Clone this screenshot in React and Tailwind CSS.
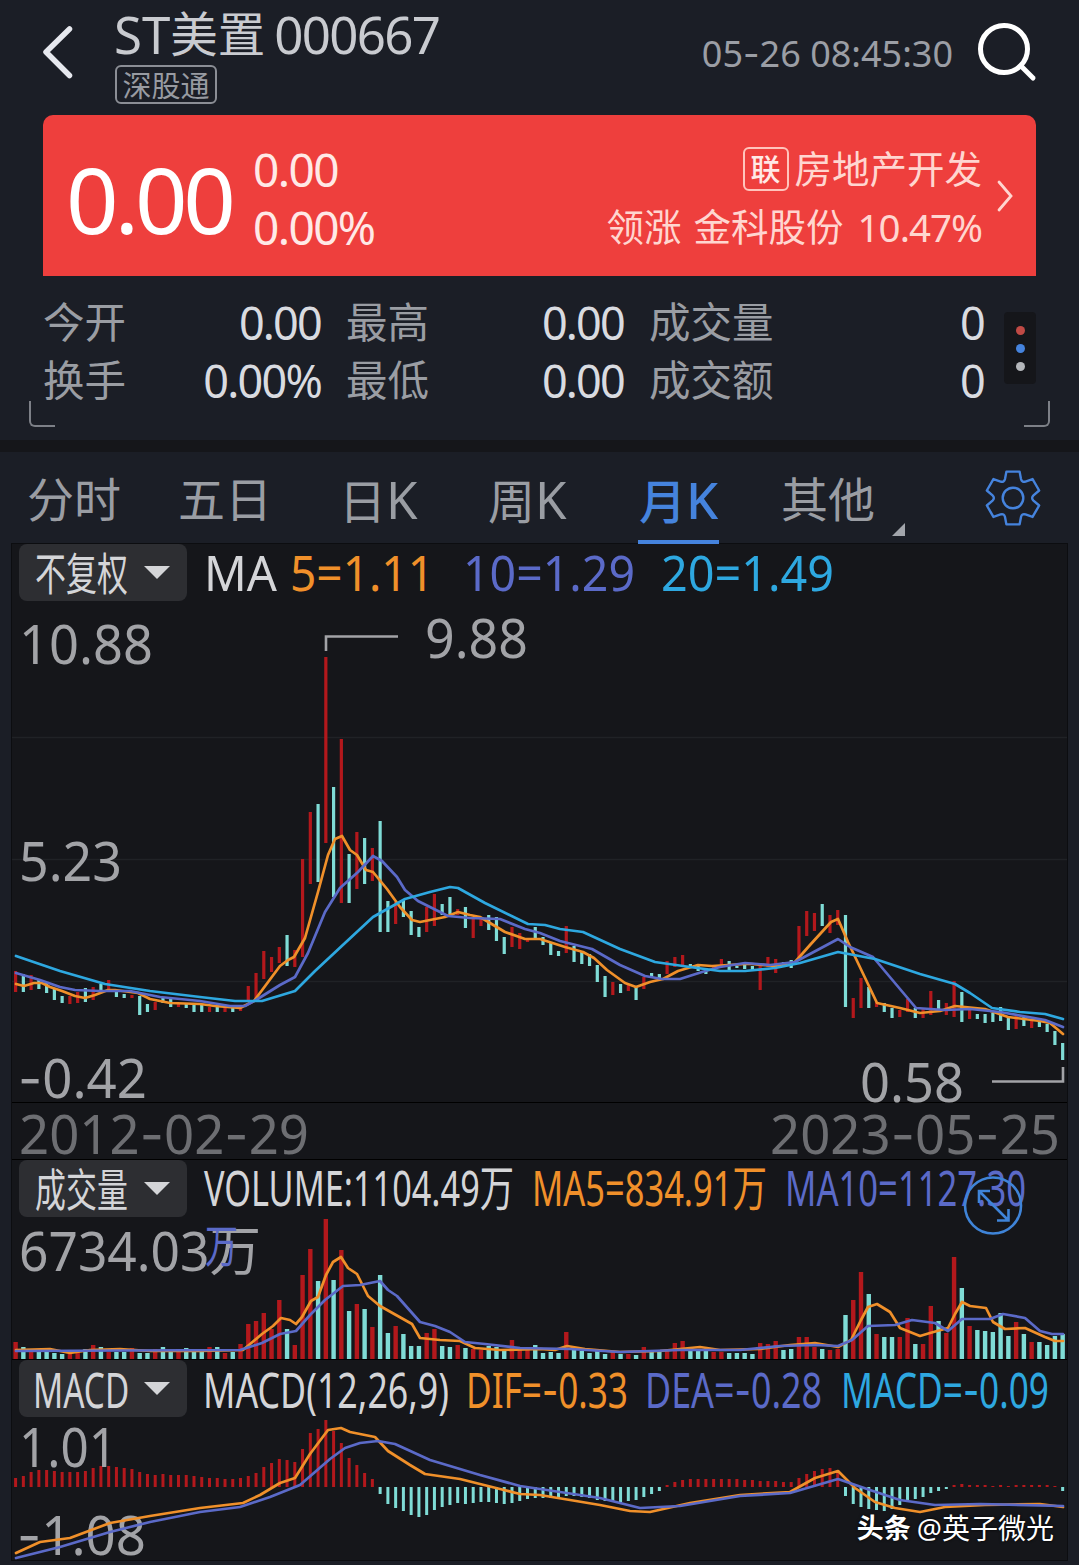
import React from "react";

const STEP = 7.756;
const START = 15.6;
const barX = (i) => START + STEP * i;

const UP = "#b3181c";
const DOWN = "#7fdcd6";
const ORANGE = "#f0902a";
const INDIGO = "#5b6ac8";
const CYAN = "#2ea8e0";

// [r = rising / c = falling, top, bottom]
const candles = [
  ["r", 971, 992], ["c", 974, 992], ["r", 975, 990], ["c", 979, 989], ["c", 983, 993], ["c", 988, 1000],
  ["c", 996, 1003], ["r", 996, 1004], ["r", 992, 1003], ["c", 988, 1002], ["r", 987, 1000], ["c", 984, 991],
  ["r", 980, 990], ["c", 991, 997], ["c", 994, 998], ["r", 995, 998], ["c", 996, 1015], ["c", 1004, 1012],
  ["r", 1002, 1010], ["c", 997, 1003], ["c", 997, 1007], ["r", 1003, 1007], ["c", 1003, 1008], ["c", 1003, 1012],
  ["c", 1005, 1012], ["r", 1007, 1012], ["c", 1007, 1012], ["r", 1007, 1012], ["c", 1007, 1012], ["r", 1006, 1011],
  ["r", 986, 1002], ["r", 973, 999], ["r", 951, 979], ["r", 957, 972], ["r", 947, 963], ["c", 935, 966],
  ["r", 950, 967], ["r", 859, 957], ["r", 812, 884], ["c", 804, 882], ["r", 657, 843], ["c", 787, 897],
  ["r", 739, 903], ["c", 854, 903], ["r", 832, 889], ["c", 838, 884], ["r", 848, 881], ["c", 821, 932],
  ["c", 901, 932], ["r", 902, 924], ["c", 900, 917], ["c", 911, 935], ["c", 927, 937], ["r", 907, 932],
  ["r", 894, 926], ["c", 904, 915], ["c", 897, 914], ["r", 909, 915], ["c", 907, 928], ["r", 919, 938],
  ["r", 918, 926], ["c", 915, 930], ["c", 917, 941], ["c", 937, 954], ["r", 927, 947], ["r", 933, 949],
  ["r", 938, 942], ["c", 927, 939], ["c", 937, 945], ["c", 943, 955], ["c", 951, 956], ["r", 926, 953],
  ["c", 946, 962], ["c", 951, 964], ["c", 954, 966], ["c", 965, 982], ["c", 976, 997], ["r", 982, 995],
  ["c", 984, 993], ["r", 985, 991], ["c", 986, 1000], ["r", 977, 989], ["c", 973, 978], ["c", 974, 980],
  ["r", 961, 974], ["r", 957, 967], ["r", 955, 967], ["c", 964, 967], ["c", 966, 971], ["c", 968, 974],
  ["r", 966, 970], ["r", 959, 965], ["c", 961, 971], ["c", 966, 968], ["c", 965, 969], ["c", 966, 970],
  ["r", 963, 990], ["r", 957, 967], ["r", 959, 973], ["c", 962, 966], ["c", 960, 968], ["r", 926, 957],
  ["r", 911, 936], ["r", 913, 931], ["c", 904, 926], ["r", 915, 933], ["r", 910, 925], ["c", 915, 1007],
  ["r", 998, 1018], ["r", 978, 1008], ["c", 987, 1008], ["r", 1002, 1007], ["c", 1003, 1012], ["c", 1008, 1018],
  ["r", 1010, 1017], ["r", 999, 1012], ["c", 1008, 1018], ["r", 1008, 1018], ["r", 991, 1015], ["c", 1000, 1009],
  ["r", 1003, 1015], ["r", 981, 1017], ["c", 992, 1022], ["r", 1010, 1019], ["c", 1014, 1019], ["c", 1014, 1023],
  ["c", 1013, 1022], ["c", 1007, 1021], ["c", 1018, 1030], ["r", 1016, 1029], ["c", 1016, 1026], ["r", 1020, 1028],
  ["c", 1022, 1027], ["c", 1024, 1032], ["c", 1031, 1045], ["c", 1043, 1060],
];

const volumes = [
  17, 12, 9, 8, 7, 6, 5, 5, 8, 10, 14, 12, 7, 7, 7, 11, 6, 6, 10, 12, 8, 8, 11, 7, 7, 12, 12, 6, 7, 15,
  35, 38, 46, 30, 59, 30, 14, 84, 110, 78, 140, 79, 109, 48, 55, 50, 32, 84, 26, 33, 25, 13, 13, 26, 30, 13, 12, 14, 11, 10,
  9, 13, 12, 10, 19, 9, 9, 14, 6, 7, 6, 27, 9, 8, 6, 9, 5, 7, 5, 5, 4, 12, 7, 8, 8, 16, 18, 9, 9, 9,
  7, 7, 6, 6, 6, 5, 16, 15, 18, 9, 10, 22, 22, 12, 10, 9, 10, 44, 59, 87, 65, 25, 22, 22, 22, 41, 15, 15, 53, 38,
  26, 102, 71, 33, 29, 28, 27, 46, 23, 37, 25, 17, 17, 14, 23, 25,
];

const macd = [
  9, 11, 15, 17, 17, 16, 15, 15, 15, 16, 19, 21, 21, 20, 19, 18, 15, 13, 12, 13, 12, 12, 12, 11, 10, 9, 9, 8, 8, 9,
  11, 14, 20, 24, 28, 27, 25, 38, 54, 58, 67, 56, 44, 29, 22, 14, 8, -7, -17, -21, -24, -28, -30, -28, -23, -20, -18, -16, -17, -16,
  -15, -15, -16, -17, -16, -14, -12, -11, -11, -11, -11, -9, -9, -10, -11, -13, -14, -15, -15, -14, -13, -10, -7, -4, 2, 5, 7, 8, 8, 8,
  8, 8, 8, 8, 7, 7, 6, 6, 6, 5, 5, 9, 13, 16, 18, 19, 17, -9, -17, -20, -22, -23, -24, -22, -18, -15, -12, -10, -6, -4,
  -2, 2, 3, 2, 2, 2, 1, 2, 1, 2, 2, 2, 2, 2, 1, -4,
];

const ma5 =
  "16,984 24,986 34,983 42,983 50,987 62,991 75,996 85,998 95,995 108,990 115,990 138,993 150,999 170,1003 200,1004 215,1006 240,1008 254,1001 280,966 288,960 294,957 305,938 318,892 328,855 335,839 342,836 350,850 357,855 366,870 373,872 387,889 400,907 412,920 420,922 445,917 458,912 470,915 480,917 505,932 525,939 540,939 565,947 583,952 594,958 607,970 625,983 636,987 650,982 663,979 678,971 698,965 712,966 745,964 752,964 775,966 795,962 810,945 831,922 838,919 848,942 877,1003 900,1008 920,1013 940,1011 955,1006 985,1009 1008,1017 1040,1021 1050,1023 1063,1034";
const ma10 =
  "16,973 40,980 60,987 75,990 100,991 130,991 160,997 200,1001 230,1006 245,1006 256,1000 280,985 295,977 308,953 325,912 340,888 358,872 373,856 382,861 397,877 405,890 418,901 430,907 448,916 470,918 500,919 525,929 540,933 560,941 592,949 620,965 645,976 662,979 680,979 702,972 720,967 745,963 770,965 795,962 838,939 850,947 873,957 916,1008 945,1010 970,1009 1000,1012 1045,1020 1063,1027";
const ma20 =
  "16,956 60,971 105,984 150,991 200,997 235,1001 262,1001 295,991 315,971 345,943 373,917 405,899 430,892 450,887 458,888 485,903 528,924 545,925 560,929 583,932 620,949 655,962 690,967 720,971 745,971 775,968 800,963 838,952 875,959 920,974 955,984 970,993 992,1008 1020,1012 1045,1014 1063,1019";
const volMa5 =
  "16,1350 50,1349 70,1353 90,1350 120,1349 150,1351 200,1351 243,1350 262,1334 273,1326 281,1318 290,1320 296,1324 302,1317 311,1301 318,1297 326,1275 333,1262 341,1257 348,1268 357,1274 368,1296 380,1306 412,1324 420,1338 440,1340 460,1341 475,1348 500,1350 540,1349 555,1350 567,1346 585,1349 620,1352 660,1351 700,1347 720,1350 760,1349 790,1345 815,1343 838,1347 851,1340 861,1320 868,1307 877,1304 890,1312 900,1328 920,1336 930,1333 948,1328 955,1314 962,1302 970,1306 986,1308 993,1322 1005,1329 1025,1328 1045,1337 1055,1341 1063,1341";
const volMa10 =
  "16,1351 240,1350 262,1343 280,1334 296,1331 310,1315 325,1300 343,1286 360,1285 380,1281 388,1290 397,1296 420,1322 435,1326 450,1332 465,1342 485,1344 520,1348 570,1349 620,1352 680,1350 740,1350 780,1346 815,1345 838,1346 852,1340 868,1326 895,1325 912,1320 935,1323 948,1331 962,1319 990,1319 1003,1314 1025,1318 1040,1331 1052,1334 1063,1334";
const dif =
  "16,1553 40,1542 70,1538 110,1523 150,1516 200,1508 243,1503 260,1495 280,1483 295,1478 310,1454 328,1430 341,1428 350,1432 375,1437 388,1451 410,1465 425,1474 460,1479 500,1489 520,1494 540,1495 570,1500 600,1505 630,1511 650,1512 690,1503 740,1495 790,1492 815,1478 838,1471 855,1488 875,1502 895,1508 920,1512 945,1507 985,1505 1040,1504 1063,1507";
const dea =
  "16,1558 60,1547 110,1532 150,1522 200,1512 240,1507 270,1497 300,1485 330,1459 345,1448 360,1443 378,1441 395,1444 430,1460 480,1475 520,1486 560,1492 600,1498 640,1508 680,1506 740,1496 790,1493 838,1479 870,1490 900,1500 935,1505 980,1504 1063,1506";

const Line = ({ points, color }) => (
  <polyline points={points} fill="none" stroke={color} strokeWidth="2.7" strokeLinejoin="round" strokeLinecap="round" />
);

// Chart text squeezed or stretched to a given width, with Inter's longer hyphen
const Label = ({ x, y, w, size = 54, fill = "#a2a3a7", children }) => (
  <text x={x} y={y} fontSize={size} fill={fill} textLength={w} lengthAdjust="spacingAndGlyphs">
    {children.split(/(-)/).map((part, i) =>
      part === "-" ? (
        <tspan key={i} className="font-['Inter']">-</tspan>
      ) : (
        part
      )
    )}
  </text>
);

const Picker = ({ children }) => (
  <div className="relative ml-[7px] flex h-[57px] w-[168px] items-center rounded-lg bg-[#2d2e32] pl-4 text-[#d4d5d8]">
    <div className="mt-[2px] w-[94px]">{children}</div>
    <svg className="ml-[15px]" width="26" height="13" viewBox="0 0 26 13">
      <path d="M0 0H26L13 13Z" fill="#d4d5d8" />
    </svg>
  </div>
);

const gearPath = () => {
  const rot = (x, y, k) => {
    const a = (k * Math.PI) / 3;
    return `${(28 + x * Math.cos(a) - y * Math.sin(a)).toFixed(2)} ${(28 + x * Math.sin(a) + y * Math.cos(a)).toFixed(2)}`;
  };
  let d = "";
  for (let k = 0; k < 6; k++) {
    d += `${k ? "L" : "M"}${rot(-8, -19, k)}L${rot(-6.6, -26.4, k)}L${rot(6.6, -26.4, k)}L${rot(8, -19, k)}`;
    d += `Q${rot(8.9, -15.4, k)} ${rot(12.45, -16.43, k)}`;
  }
  return d + "Z";
};

const Header = () => (
  <header className="flex h-[115px] items-start">
    <svg className="ml-[41px] mt-[24px]" width="33" height="56" viewBox="0 0 33 56">
      <path d="M28.5 5L5 28L28.5 51.500" fill="none" stroke="#e6e8ee" strokeWidth="5.500" strokeLinecap="round" strokeLinejoin="round" />
    </svg>
    <div className="ml-[40px] mt-[6px] w-[420px]">
      <h1 className="flex h-[56px] items-center whitespace-nowrap leading-none text-[#c9cbd0]">
        <span className="text-[51px]">ST</span>
        <span className="text-[47.500px]">美置</span>
        <span className="ml-[9px] text-[51px] tracking-[-1.700px]">000667</span>
      </h1>
      <div className="ml-[1px] mt-[3px] flex h-[39px] w-[102px] items-center justify-center rounded-md border-2 border-[#8b8e95] pt-[2px] text-[29px] leading-none text-[#989ba2]">
        深股通
      </div>
    </div>
    <div className="ml-auto mr-[23px] mt-[32px] whitespace-nowrap text-[36px] leading-[44px] text-[#9b9ea5]">
      05<span className="font-['Inter']">-</span>26 08:45:30
    </div>
    <svg className="mr-[41px] mt-[21px]" width="62" height="62" viewBox="0 0 62 62">
      <circle cx="28" cy="28" r="23.500" fill="none" stroke="#fff" strokeWidth="5" />
      <path d="M45 45L57 57" stroke="#fff" strokeWidth="5" strokeLinecap="round" />
    </svg>
  </header>
);

const PriceCard = () => (
  <section className="mx-[43px] flex h-[161px] items-center rounded-t-[10px] bg-[#ee3f3d] text-white">
    <div className="ml-[23px] mt-[7px] w-[187px] text-[92px] leading-none tracking-[-4.200px]">0.00</div>
    <div className="mt-[4px] text-[46px] leading-[58px] tracking-[-1.600px] text-[#ffe9e6]">
      <div>0.00</div>
      <div>0.00%</div>
    </div>
    <div className="ml-auto mt-[3px] text-[37.500px] leading-[58px] text-[#ffd6d0]">
      <div className="flex items-center justify-end pt-px">
        <span className="mr-[6px] flex h-[44px] w-[46px] items-center justify-center rounded-md border-2 border-[#ffc4bc] text-[30px] font-medium leading-none text-[#ffe9e6]">
          联
        </span>
        房地产开发
      </div>
      <div className="flex items-center justify-end whitespace-nowrap">
        <span className="mr-[12px]">领涨</span>
        <span className="mr-[14px]">金科股份</span>
        <span className="text-[38.500px] tracking-[-1px]">10.47%</span>
      </div>
    </div>
    <svg className="ml-[14px] mr-[21px]" width="19" height="34" viewBox="0 0 19 34">
      <path d="M3 3L15 17L3 31" fill="none" stroke="#ffd6d0" strokeWidth="2.800" strokeLinecap="round" />
    </svg>
  </section>
);

const quotes = [
  ["今开", "0.00", "最高", "0.00", "成交量", "0"],
  ["换手", "0.00%", "最低", "0.00", "成交额", "0"],
];

const Quotes = () => (
  <section className="relative h-[164px] px-[43px] pt-[17px]">
    {quotes.map((row) => (
      <div key={row[0]} className="grid h-[58px] grid-cols-[83px_195px_25px_83px_195px_25px_125px_210px] items-center whitespace-nowrap text-[41.500px] leading-none text-[#9a9da3]">
        {row.map((cell, i) =>
          i % 2 ? (
            <span key={i} className={i < 5 ? "col-span-1 mr-0 text-right text-[45px] tracking-[-1.800px] text-[#d9dbe0]" : "text-right text-[45px] tracking-[-1.800px] text-[#d9dbe0]"}>
              {cell}
            </span>
          ) : (
            <span key={i} className={i === 0 ? "pt-[2px]" : i === 2 ? "col-start-4 pt-[2px]" : "col-start-7 pt-[2px]"}>
              {cell}
            </span>
          )
        )}
      </div>
    ))}
    <div className="absolute right-[43px] top-[36px] flex h-[72px] w-[32px] flex-col items-center justify-center gap-[9px] rounded bg-[#15161a]">
      <i className="h-[9px] w-[9px] rounded-full bg-[#c04a45]" />
      <i className="h-[9px] w-[9px] rounded-full bg-[#4583dd]" />
      <i className="h-[9px] w-[9px] rounded-full bg-[#b4b7bb]" />
    </div>
    <div className="absolute left-[29px] top-[125px] h-[26px] w-[26px] rounded-bl-md border-b-2 border-l-2 border-[#7d8087]" />
    <div className="absolute right-[29px] top-[125px] h-[26px] w-[26px] rounded-br-md border-b-2 border-r-2 border-[#7d8087]" />
  </section>
);

const Tabs = () => (
  <nav className="grid h-[92px] grid-cols-[151px_161px_149px_149px_144px_204px_60px] pl-[27px] text-[47px] leading-[94px] text-[#9a9da3]">
    <span>分时</span>
    <span>五日</span>
    <span>日<span className="text-[51px]">K</span></span>
    <span>周<span className="text-[51px]">K</span></span>
    <span className="relative h-[92px] font-medium text-[#4583dd]">
      <span className="ml-[2px]">月<span className="text-[51px]">K</span></span>
      <i className="absolute bottom-0 left-[1px] h-[4px] w-[81px] bg-[#4583dd]" />
    </span>
    <span className="relative">
      其他
      <svg className="absolute left-[111px] top-[71px]" width="13" height="13" viewBox="0 0 13 13">
        <path d="M13 0V13H0Z" fill="#a2a5ab" />
      </svg>
    </span>
    <svg className="mt-[18px]" width="56" height="56" viewBox="0 0 56 56" fill="none" stroke="#4583dd" strokeWidth="2.400" strokeLinejoin="round">
      <path d={gearPath()} />
      <circle cx="28" cy="28" r="10.300" />
    </svg>
  </nav>
);

const PriceChart = () => (
  <section className="relative h-[559px] border-b border-black bg-[#15161a]">
    <svg className="absolute inset-0 overflow-visible" width="1055" height="559" viewBox="12 544 1055 559">
      {[737, 859, 981].map((y) => (
        <path key={y} d={`M12 ${y}.500H1067`} stroke="#202226" strokeWidth="1.500" />
      ))}
      {candles.map(([t, top, bottom], i) => (
        <rect key={i} x={barX(i) - 1.6} y={top} width="3.200" height={bottom - top} fill={t === "r" ? UP : DOWN} />
      ))}
      <Label x="19" y="664" w="134">10.88</Label>
      <Label x="19" y="881" w="103">5.23</Label>
      <Label x="18" y="1097.500" w="129">-0.42</Label>
      <Label x="425" y="658" w="103">9.88</Label>
      <Label x="860" y="1102" w="104">0.58</Label>
      <path d="M326 651V636.500H398M992 1081.500H1063V1067" fill="none" stroke="#a2a3a7" strokeWidth="2.600" />
      <Line points={ma5} color={ORANGE} />
      <Line points={ma10} color={INDIGO} />
      <Line points={ma20} color={CYAN} />
      <Label x="204" y="591" w="73" size={50} fill="#d4d5d8">MA</Label>
      <Label x="290" y="591" w="144" size={50} fill={ORANGE}>5=1.11</Label>
      <Label x="463" y="591" w="172" size={50} fill={INDIGO}>10=1.29</Label>
      <Label x="661" y="591" w="173" size={50} fill={CYAN}>20=1.49</Label>
    </svg>
    <Picker>
      <div className="w-max origin-left scale-x-[0.680] text-[45.500px] leading-none">不复权</div>
    </Picker>
  </section>
);

const VolumeChart = () => (
  <section className="relative h-[200px] border-b border-black bg-[#15161a]">
    <svg className="absolute inset-0 overflow-visible" width="1055" height="200" viewBox="12 1160 1055 200">
      <Label x="19" y="1270.500" w="242">6734.03万</Label>
      {volumes.map((h, i) => (
        <rect key={i} x={barX(i) - 2.2} y={1359 - h} width="4.400" height={h} fill={candles[i][0] === "r" ? UP : DOWN} />
      ))}
      <Label x="204" y="1206" w="310" size={49} fill="#d4d5d8">VOLUME:1104.49万</Label>
      <Label x="532" y="1206" w="235" size={49} fill={ORANGE}>MA5=834.91万</Label>
      <Label x="785" y="1206" w="241" size={49} fill={INDIGO}>MA10=1127.30</Label>
      <Label x="205" y="1263" w="33" size={45} fill={INDIGO}>万</Label>
      <Line points={volMa5} color={ORANGE} />
      <Line points={volMa10} color={INDIGO} />
      <g fill="none" stroke="#3f84d8" strokeWidth="2.600">
        <circle cx="993" cy="1205.500" r="28" />
        <path d="M979 1191L1008 1220M990 1191H979V1203M997 1220.500H1008.500V1209" />
      </g>
    </svg>
    <Picker>
      <div className="w-max origin-left scale-x-[0.680] text-[45.500px] leading-none">成交量</div>
    </Picker>
  </section>
);

const MacdChart = () => (
  <section className="relative h-[200px] bg-[#15161a]">
    <svg className="absolute inset-0 overflow-visible" width="1055" height="200" viewBox="12 1360 1055 200">
      {macd.map((h, i) => (
        <rect key={i} x={barX(i) - 1.5} y={h > 0 ? 1487 - h : 1487} width="3" height={Math.abs(h)} fill={h > 0 ? UP : DOWN} />
      ))}
      <Label x="19" y="1466.500" w="98">1.01</Label>
      <Label x="17" y="1555" w="129">-1.08</Label>
      <Line points={dif} color={ORANGE} />
      <Line points={dea} color={INDIGO} />
      <Label x="203" y="1407.500" w="246" size={49} fill="#d4d5d8">MACD(12,26,9)</Label>
      <Label x="466" y="1407.500" w="162" size={49} fill={ORANGE}>DIF=-0.33</Label>
      <Label x="645" y="1407.500" w="177" size={49} fill={INDIGO}>DEA=-0.28</Label>
      <Label x="841" y="1407.500" w="208" size={49} fill={CYAN}>MACD=-0.09</Label>
    </svg>
    <Picker>
      <div className="-ml-[2px] -mt-[1px] w-max origin-left scale-x-[0.680] text-[49px] leading-none">MACD</div>
    </Picker>
    <div className="absolute bottom-[12px] right-[13px] flex items-center gap-[6px] whitespace-nowrap text-[28px] leading-[40px] text-white [text-shadow:0_0_3px_#000]">
      <b className="text-[27px]">头条</b>
      <span>@英子微光</span>
    </div>
  </section>
);

const App = () => {
  return (
    <div className="h-[1565px] w-[1079px] overflow-hidden bg-[#1b1e26] font-['Noto_Sans','Noto_Sans_CJK_SC',sans-serif]">
      <Header />
      <PriceCard />
      <Quotes />
      <div className="h-[12px] bg-[#15161a]" />
      <Tabs />
      <main className="mx-[12px] shadow-[0_0_0_1px_#0c0d10]">
        <PriceChart />
        <div className="flex h-[57px] items-center border-b border-black bg-[#15161a]">
          <svg className="overflow-visible" width="1055" height="57" viewBox="12 1103 1055 57">
            <Label x="19" y="1154" w="290" fill="#6d6e72">2012-02-29</Label>
            <Label x="770" y="1154" w="290" fill="#6d6e72">2023-05-25</Label>
          </svg>
        </div>
        <VolumeChart />
        <MacdChart />
      </main>
    </div>
  );
};

export default App;
